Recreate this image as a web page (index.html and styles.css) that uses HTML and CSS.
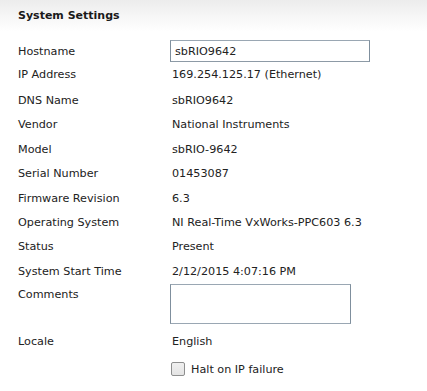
FILE: index.html
```html
<!DOCTYPE html>
<html>
<head>
<meta charset="utf-8">
<link rel="stylesheet" href="styles.css">
</head>
<body>
<div class="panel">
  <div class="header">System Settings</div>
  <div class="body">
    <div class="row row-input">
      <div class="label">Hostname</div>
      <div class="value"><input class="text-input" type="text" value="sbRIO9642"></div>
    </div>
    <div class="row"><div class="label">IP Address</div><div class="value text">169.254.125.17 (Ethernet)</div></div>
    <div class="row row-dns"><div class="label">DNS Name</div><div class="value text">sbRIO9642</div></div>
    <div class="row"><div class="label">Vendor</div><div class="value text">National Instruments</div></div>
    <div class="row"><div class="label">Model</div><div class="value text">sbRIO-9642</div></div>
    <div class="row"><div class="label">Serial Number</div><div class="value text">01453087</div></div>
    <div class="row"><div class="label">Firmware Revision</div><div class="value text">6.3</div></div>
    <div class="row"><div class="label">Operating System</div><div class="value text">NI Real-Time VxWorks-PPC603 6.3</div></div>
    <div class="row"><div class="label">Status</div><div class="value text">Present</div></div>
    <div class="row"><div class="label">System Start Time</div><div class="value text">2/12/2015 4:07:16 PM</div></div>
    <div class="row row-area">
      <div class="label label-top">Comments</div>
      <div class="value"><textarea class="text-area"></textarea></div>
    </div>
    <div class="row"><div class="label">Locale</div><div class="value text">English</div></div>
    <div class="row row-check">
      <div class="label"></div>
      <label class="value check"><span class="box"></span><span>Halt on IP failure</span></label>
    </div>
  </div>
</div>
</body>
</html>
```
FILE: styles.css
```css
html, body {
  margin: 0;
  padding: 0;
  background: #ffffff;
}
body {
  font-family: "DejaVu Sans", Verdana, sans-serif;
  font-size: 11.2px;
  color: #222222;
}
.panel {
  width: 427px;
}
.header {
  height: 32px;
  padding-left: 18px;
  display: flex;
  align-items: center;
  padding-bottom: 2px;
  box-sizing: border-box;
  font-size: 11px;
  font-weight: bold;
  color: #1a1a1a;
  background: linear-gradient(to bottom, #ececec 0%, #f6f6f6 50%, #ffffff 100%);
}
.body {
  padding-top: 8px;
  display: flex;
  flex-direction: column;
}
.row {
  display: flex;
  align-items: center;
  height: 24.4px;
}
.row-dns {
  margin-top: 2px;
}
.label {
  width: 152px;
  padding-left: 18px;
  flex: none;
}
.value {
  flex: 1;
}
.text {
  padding-left: 2px;
}
.row-input {
  height: 22px;
}
.text-input {
  box-sizing: border-box;
  width: 200px;
  height: 22px;
  margin: 0;
  padding: 0 0 0 4px;
  font-family: "DejaVu Sans", Verdana, sans-serif;
  font-size: 11.2px;
  color: #222222;
  border: 1px solid #9aa7b3;
  border-left-color: #7f8f9d;
  border-right-color: #7f8f9d;
  border-bottom-color: #8d9aa6;
  outline: none;
}
.row-area {
  height: auto;
  align-items: flex-start;
  margin-top: 0;
}
.label-top {
  padding-top: 4px;
}
.text-area {
  box-sizing: border-box;
  display: block;
  width: 181px;
  height: 40px;
  margin: 0;
  resize: none;
  border: 1px solid #9aa7b3;
  border-left-color: #7f8f9d;
  border-right-color: #7f8f9d;
  outline: none;
}
.row-area + .row {
  margin-top: 6px;
}
.row-check {
  margin-top: 3px;
}
.check {
  display: flex;
  align-items: center;
  gap: 6px;
  padding-left: 1px;
}
.box {
  box-sizing: border-box;
  width: 14px;
  height: 14px;
  border: 1px solid #8e8f8f;
  border-radius: 2px;
  background: linear-gradient(to bottom, #f0f0f0, #e4e4e4);
}
```
